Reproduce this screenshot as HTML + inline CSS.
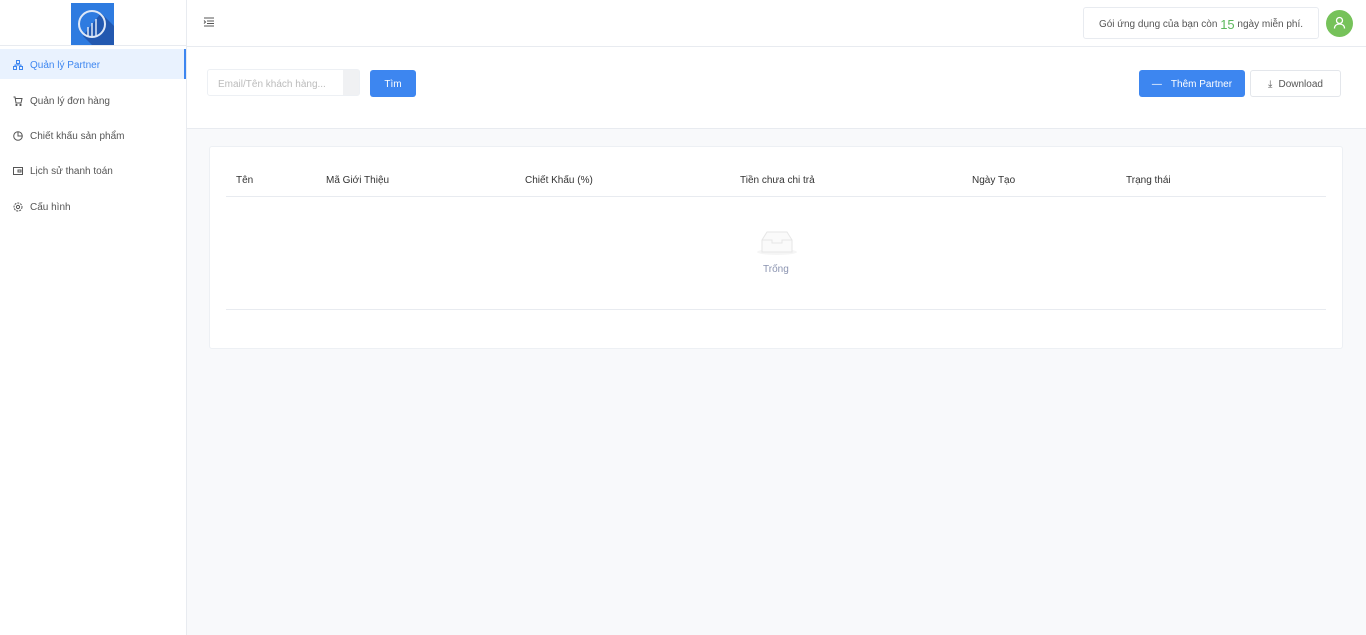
<!DOCTYPE html>
<html><head><meta charset="utf-8"><style>
*{box-sizing:border-box;margin:0;padding:0}
body{width:1366px;height:635px;overflow:hidden;font-family:"Liberation Sans",sans-serif;background:#f8f9fb;position:relative;color:#333;font-size:10px}
.side{position:absolute;left:0;top:0;width:187px;height:635px;background:#fff;border-right:1px solid #e8ebf0}
.logo{position:absolute;left:71px;top:3px;width:43px;height:43px;background:#2e7be0;overflow:hidden}
.sidetop{position:absolute;left:0;top:45px;width:186px;border-top:1px solid #e8ebf0}
.item{position:absolute;left:0;width:186px;height:30px;display:flex;align-items:center;padding-left:13px;padding-top:2px;font-size:10px;color:#555}
.item svg{margin-right:7px}
.act{background:#e9f2fe;color:#3d86f0;border-right:2px solid #3d86f0}
.top{position:absolute;left:187px;top:0;right:0;height:47px;background:#fff;border-bottom:1px solid #e8ebf0}
.bar{position:absolute;left:187px;top:47px;right:0;height:82px;background:#fff;border-bottom:1px solid #e8ebf0}
.btn{position:absolute;display:flex;align-items:center;justify-content:center;border-radius:3px;font-size:10px;padding-top:2px}
.card{position:absolute;left:209px;top:146px;width:1134px;height:203px;background:#fff;border:1px solid #edf0f4;border-radius:3px}
.th{position:absolute;top:175px;font-size:10px;color:#333}
</style></head><body>
<div class="side">
<div class="logo"><svg width="43" height="43"><path d="M30 10L43 23V43H22L12 33z" fill="#2258b0"/><circle cx="21" cy="21" r="13" fill="none" stroke="#dde8f8" stroke-width="2"/><path d="M17 33V24M21 34V20M25 33V16" stroke="#dde8f8" stroke-width="1.5"/></svg></div>
<div class="sidetop"></div>
<div class="item act" style="top:49px"><svg width="10" height="10" viewBox="0 0 10 10" fill="none" stroke="#3d86f0"><rect x="3.5" y="0.5" width="3" height="3"/><rect x="0.5" y="6.5" width="3" height="3"/><rect x="6.5" y="6.5" width="3" height="3"/><path d="M5 3.5v1.5M2 6.5V5h6v1.5"/></svg>Quản lý Partner</div>
<div class="item" style="top:85px"><svg width="10" height="10" viewBox="0 0 10 10" fill="none" stroke="#555"><path d="M0.5 1h1.5l1 6h5l1-4.5H2.5"/><circle cx="3.5" cy="9" r=".6"/><circle cx="7.5" cy="9" r=".6"/></svg>Quản lý đơn hàng</div>
<div class="item" style="top:120px"><svg width="10" height="10" viewBox="0 0 10 10" fill="none" stroke="#555"><circle cx="5" cy="5" r="4.3"/><path d="M5 .7V5h4.3"/></svg>Chiết khấu sản phẩm</div>
<div class="item" style="top:155px"><svg width="10" height="10" viewBox="0 0 10 10" fill="none" stroke="#555"><rect x=".5" y="1.5" width="9" height="7"/><rect x="5" y="4" width="3" height="2"/></svg>Lịch sử thanh toán</div>
<div class="item" style="top:191px"><svg width="10" height="10" viewBox="0 0 10 10" fill="none" stroke="#555"><circle cx="5" cy="5" r="1.6"/><circle cx="5" cy="5" r="4" stroke-dasharray="2 1"/></svg>Cấu hình</div>
</div>
<div class="top">
<svg style="position:absolute;left:16px;top:17px" width="12" height="10" viewBox="0 0 12 10" stroke="#555"><path d="M1 1h10M4 4h7M4 6.5h7M1 9h10M1 3.5l1.5 1.5L1 6.5" fill="none"/></svg>
<div style="position:absolute;left:896px;top:7px;width:236px;height:32px;border:1px solid #e8ebf0;border-radius:3px;display:flex;align-items:center;justify-content:center;font-size:10px;color:#555;padding-top:2px">Gói ứng dụng của bạn còn&nbsp;<span style="color:#5cb85c;font-size:13px">15</span>&nbsp;ngày miễn phí.</div>
<div style="position:absolute;left:1139px;top:10px;width:27px;height:27px;border-radius:50%;background:#76c25a"><svg width="27" height="27" viewBox="0 0 27 27" fill="none" stroke="#fff" stroke-width="1.3"><circle cx="13.5" cy="10.5" r="3"/><path d="M8.5 18.5c0-3 2.3-4.5 5-4.5s5 1.5 5 4.5"/></svg></div>
</div>
<div class="bar"></div>
<div style="position:absolute;left:207px;top:69px;width:153px;height:27px;border:1px solid #edf0f4;border-radius:3px;background:#fff;font-size:10px;color:#bbb;padding:9px 10px">Email/Tên khách hàng...</div>
<div style="position:absolute;left:343px;top:70px;width:16px;height:25px;background:#f0f1f3"></div>
<div class="btn" style="left:370px;top:70px;width:46px;height:27px;background:#3d86f0;color:#fff">Tìm</div>
<div class="btn" style="left:1139px;top:70px;width:106px;height:27px;background:#3d86f0;color:#fff"><span style="margin-right:9px">—</span>Thêm Partner</div>
<div class="btn" style="left:1250px;top:70px;width:91px;height:27px;background:#fff;border:1px solid #e3e6eb;color:#555"><span style="margin-right:6px">⤓</span>Download</div>
<div class="card"></div>
<div class="th" style="left:236px">Tên</div>
<div class="th" style="left:326px">Mã Giới Thiệu</div>
<div class="th" style="left:525px">Chiết Khấu (%)</div>
<div class="th" style="left:740px">Tiền chưa chi trả</div>
<div class="th" style="left:972px">Ngày Tạo</div>
<div class="th" style="left:1126px">Trạng thái</div>
<div style="position:absolute;left:226px;top:196px;width:1100px;border-top:1px solid #e8ebf0"></div>
<div style="position:absolute;left:226px;top:309px;width:1100px;border-top:1px solid #e8ebf0"></div>
<svg style="position:absolute;left:755px;top:228px" width="44" height="28" viewBox="0 0 44 28"><ellipse cx="22" cy="24" rx="20" ry="3" fill="#f5f5f5"/><path d="M7 12l5-8h20l5 8v12H7z" fill="#fafafa" stroke="#e6e6e6"/><path d="M7 12h10v3h10v-3h10" fill="none" stroke="#e6e6e6"/></svg>
<div style="position:absolute;left:763px;top:264px;font-size:10px;color:#8a93b0">Trống</div>
</body></html>
